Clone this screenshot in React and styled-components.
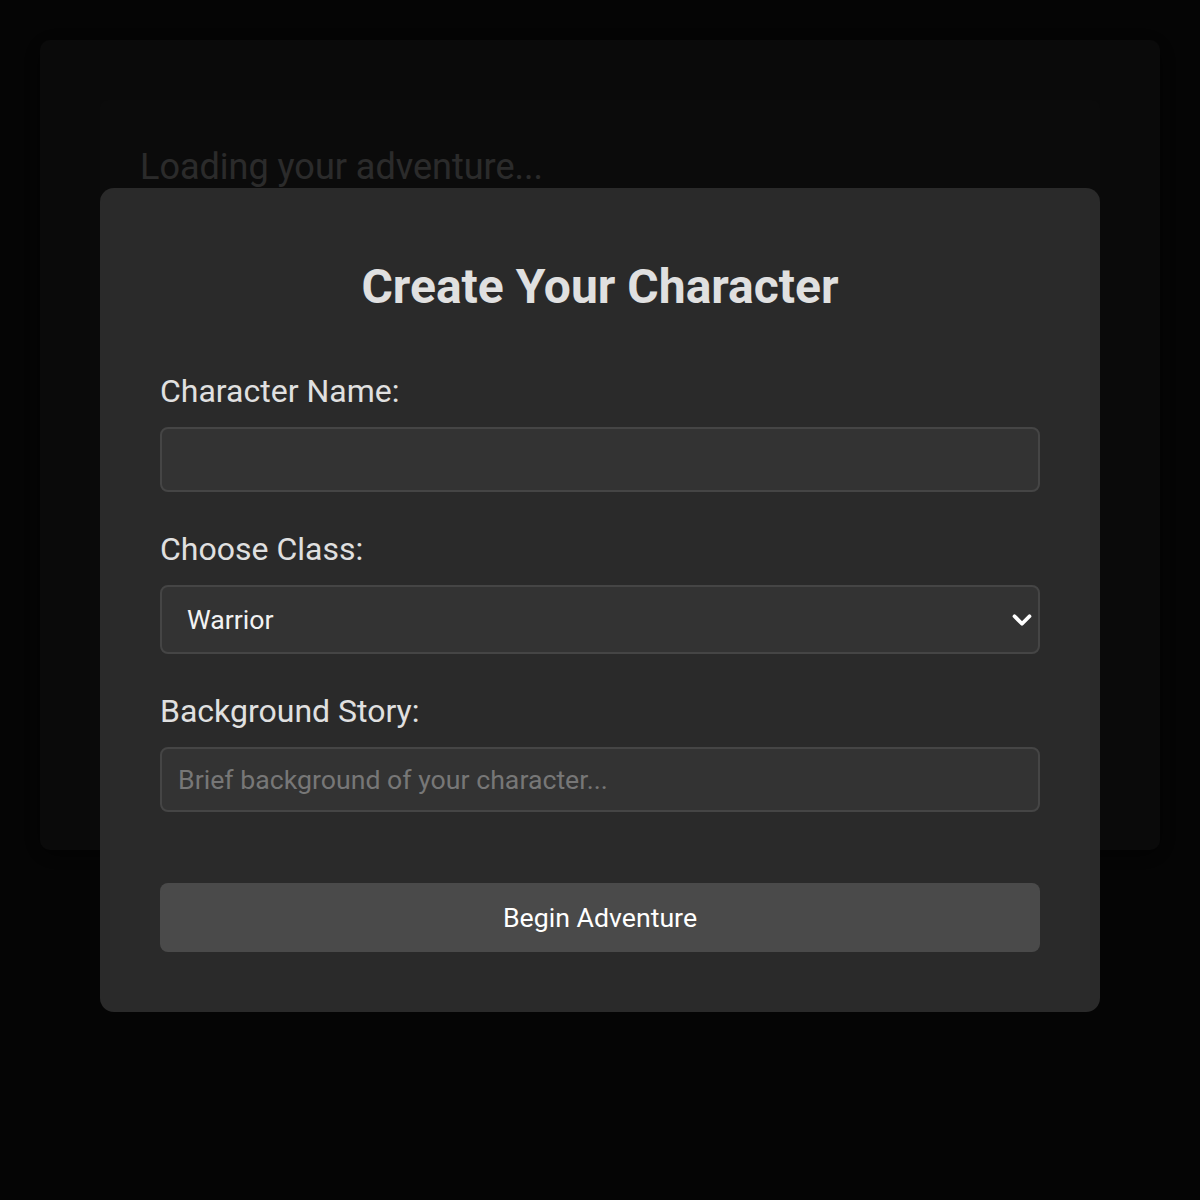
import React from "react";
import styled, { createGlobalStyle } from "styled-components";
import { ChevronDown } from "lucide-react";

const GlobalStyle = createGlobalStyle`
  html, body {
    margin: 0;
    padding: 0;
    background: #1a1a1a;
    font-family: Roboto, "Liberation Sans", sans-serif;
  }
  * {
    box-sizing: border-box;
  }
`;

const App = () => {
  return (
    <>
      <GlobalStyle />
      <Page>
        <GameContainer>
          <StoryPanel>
            <LoadingText>Loading your adventure...</LoadingText>
          </StoryPanel>
        </GameContainer>
      </Page>
      <Overlay>
        <Modal>
          <Title>Create Your Character</Title>
          <FormGroup>
            <Label htmlFor="name">Character Name:</Label>
            <Input id="name" type="text" />
          </FormGroup>
          <FormGroup>
            <Label htmlFor="class">Choose Class:</Label>
            <SelectWrap>
              <Select id="class" defaultValue="warrior">
                <option value="warrior">Warrior</option>
                <option value="mage">Mage</option>
                <option value="rogue">Rogue</option>
                <option value="cleric">Cleric</option>
              </Select>
              <Chevron size={30} strokeWidth={3} />
            </SelectWrap>
          </FormGroup>
          <FormGroup>
            <Label htmlFor="story">Background Story:</Label>
            <Input
              id="story"
              type="text"
              placeholder="Brief background of your character..."
            />
          </FormGroup>
          <StartButton type="button">Begin Adventure</StartButton>
        </Modal>
      </Overlay>
    </>
  );
};

export default App;

const Page = styled.div`
  padding: 40px;
  min-height: 1200px;
`;

const GameContainer = styled.div`
  height: 810px;
  padding: 60px;
  display: flex;
  flex-direction: column;
  background: #333333;
  border-radius: 10px;
  box-shadow: 0 4px 22px rgba(0, 0, 0, 0.6);
`;

const StoryPanel = styled.div`
  flex: 1;
  padding: 40px;
  background: #383838;
  border-radius: 8px;
`;

const LoadingText = styled.p`
  margin: 0;
  font-size: 36px;
  line-height: 1.55;
  color: #d6d6d6;
`;

const Overlay = styled.div`
  position: fixed;
  inset: 0;
  display: flex;
  align-items: center;
  justify-content: center;
  background: rgba(0, 0, 0, 0.8);
`;

const Modal = styled.div`
  width: 1000px;
  padding: 60px;
  background: #2a2a2a;
  border-radius: 14px;
`;

const Title = styled.h2`
  margin: 10px 0 57px;
  font-size: 48px;
  font-weight: 700;
  line-height: normal;
  text-align: center;
  color: #e0e0e0;
`;

const FormGroup = styled.div`
  margin-bottom: 38px;
`;

const Label = styled.label`
  display: block;
  margin-bottom: 17px;
  font-size: 32px;
  line-height: normal;
  color: #e0e0e0;
`;

const Input = styled.input`
  display: block;
  width: 100%;
  height: 65px;
  padding: 0 16px;
  font-family: inherit;
  font-size: 26.7px;
  color: #f2f2f2;
  background: #333333;
  border: 2px solid #454545;
  border-radius: 8px;
  outline: none;

  &::placeholder {
    color: #777777;
  }
`;

const SelectWrap = styled.div`
  position: relative;
`;

const Select = styled.select`
  display: block;
  width: 100%;
  height: 69px;
  padding: 0 25px;
  font-family: inherit;
  font-size: 26.7px;
  color: #f2f2f2;
  background: #333333;
  border: 2px solid #454545;
  border-radius: 8px;
  appearance: none;
  outline: none;
`;

const Chevron = styled(ChevronDown)`
  position: absolute;
  right: 3px;
  top: 50%;
  transform: translateY(-50%);
  color: #ffffff;
  pointer-events: none;
`;

const StartButton = styled.button`
  display: block;
  width: 100%;
  height: 69px;
  margin-top: 71px;
  font-family: inherit;
  font-size: 26.7px;
  color: #ffffff;
  background: #4a4a4a;
  border: none;
  border-radius: 8px;
  cursor: pointer;
`;
